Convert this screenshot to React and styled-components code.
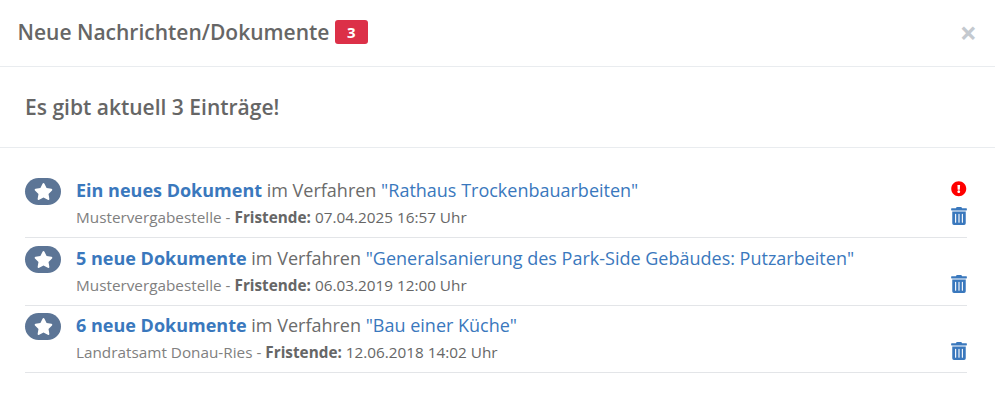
import React from "react";
import styled, { createGlobalStyle } from "styled-components";
import { FaStar, FaTrashAlt, FaExclamationCircle } from "react-icons/fa";

const GlobalStyle = createGlobalStyle`
  html, body {
    margin: 0;
    padding: 0;
    background: #fff;
    font-family: "Open Sans", sans-serif;
  }
`;

const entries = [
  {
    id: 1,
    lead: "Ein neues Dokument",
    title: "Rathaus Trockenbauarbeiten",
    office: "Mustervergabestelle",
    deadline: "07.04.2025 16:57 Uhr",
    urgent: true,
  },
  {
    id: 2,
    lead: "5 neue Dokumente",
    title: "Generalsanierung des Park-Side Gebäudes: Putzarbeiten",
    office: "Mustervergabestelle",
    deadline: "06.03.2019 12:00 Uhr",
  },
  {
    id: 3,
    lead: "6 neue Dokumente",
    title: "Bau einer Küche",
    office: "Landratsamt Donau-Ries",
    deadline: "12.06.2018 14:02 Uhr",
  },
];

export default function App() {
  return (
    <Modal>
      <GlobalStyle />
      <Header>
        <Title>
          Neue Nachrichten/Dokumente <Badge>3</Badge>
        </Title>
        <Close>×</Close>
      </Header>
      <Intro>Es gibt aktuell 3 Einträge!</Intro>
      <List>
        {entries.map((entry) => (
          <Row key={entry.id}>
            <StarPill>
              <FaStar />
            </StarPill>
            <Content>
              <Headline>
                <Lead>{entry.lead}</Lead> im Verfahren{" "}
                <Project>"{entry.title}"</Project>
              </Headline>
              <Meta>
                {entry.office} - <strong>Fristende:</strong>{" "}
                <Deadline>{entry.deadline}</Deadline>
              </Meta>
            </Content>
            <Actions>
              {entry.urgent && (
                <Urgent>
                  <FaExclamationCircle />
                </Urgent>
              )}
              <Trash>
                <FaTrashAlt />
              </Trash>
            </Actions>
          </Row>
        ))}
      </List>
    </Modal>
  );
}

const Modal = styled.div`
  width: 995px;
  height: 402px;
  overflow: hidden;
  color: #666;
`;

const Header = styled.div`
  display: flex;
  align-items: center;
  justify-content: space-between;
  height: 66px;
  padding: 0 18px 0 17.5px;
  border-bottom: 1px solid #e9ecef;
`;

const Title = styled.h5`
  margin: 0 0 3px;
  font-size: 21px;
  font-weight: 600;
  color: #666;
`;

const Badge = styled.span`
  display: inline-block;
  min-width: 33px;
  box-sizing: border-box;
  padding: 0 6px;
  border-radius: 3px;
  background: #dc3048;
  color: #fff;
  font-size: 15px;
  font-weight: 700;
  line-height: 24px;
  text-align: center;
  vertical-align: 2px;
`;

const Close = styled.span`
  font-size: 30px;
  font-weight: 700;
  line-height: 1;
  color: #c4c9cf;
`;

const Intro = styled.h5`
  margin: 0;
  height: 81px;
  padding: 0 25px;
  box-sizing: border-box;
  display: flex;
  align-items: center;
  border-bottom: 1px solid #e9ecef;
  font-size: 21px;
  font-weight: 600;
  color: #666;
`;

const List = styled.div`
  padding: 22.7px 28px 0 25px;
`;

const Row = styled.div`
  display: flex;
  align-items: flex-start;
  height: 67.5px;
  box-sizing: border-box;
  padding-top: 6.5px;
  border-bottom: 1px solid #e3e5e8;
`;

const StarPill = styled.div`
  flex: none;
  display: flex;
  align-items: center;
  justify-content: center;
  width: 36px;
  height: 27px;
  margin: 1px 15px 0 0;
  border-radius: 14px;
  background: #5c7596;
  color: #fff;
  font-size: 19px;
`;

const Content = styled.div`
  flex: 1;
`;

const Headline = styled.div`
  margin-bottom: 1px;
  font-size: 18px;
  line-height: 26px;
  color: #6b6b6b;
`;

const Lead = styled.span`
  font-weight: 700;
  color: #3a78bd;
`;

const Project = styled.span`
  color: #3a78bd;
`;

const Meta = styled.div`
  font-size: 15.3px;
  line-height: 26px;
  color: #808080;

  strong {
    color: #666;
    font-weight: 700;
  }
`;

const Deadline = styled.span`
  color: #666;
`;

const Actions = styled.div`
  flex: none;
  display: flex;
  flex-direction: column;
  align-items: center;
  justify-content: flex-end;
  width: 16px;
  height: 48.1px;
`;

const Urgent = styled.span`
  display: flex;
  font-size: 15.5px;
  color: #ff0000;
  margin-bottom: 10.5px;
`;

const Trash = styled.span`
  display: flex;
  font-size: 18px;
  color: #3a78bd;
`;
